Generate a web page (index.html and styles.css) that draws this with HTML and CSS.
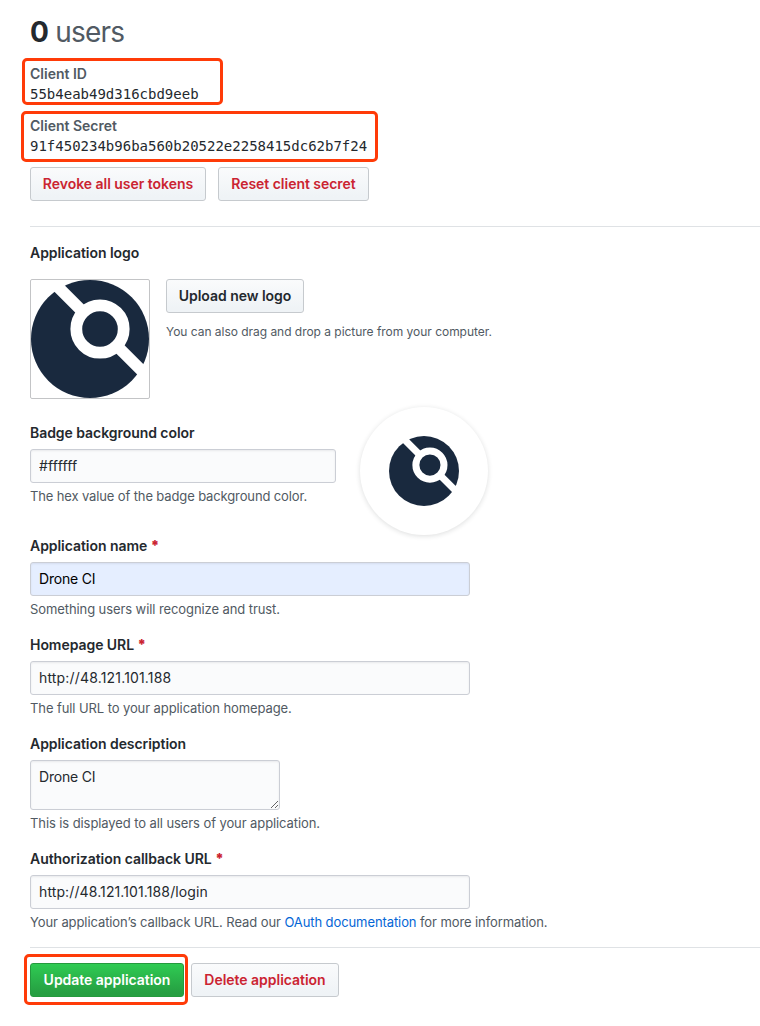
FILE: index.html
```html
<!DOCTYPE html>
<html lang="en">
<head>
<meta charset="utf-8">
<title>Drone CI</title>
<link rel="stylesheet" href="styles.css">
</head>
<body>
<svg class="defs" width="0" height="0" aria-hidden="true">
  <symbol id="drone" viewBox="0 0 118 118">
    <circle cx="59" cy="59" r="59" fill="#19293e"/>
    <path d="M9-11 139 119" stroke="#fff" stroke-width="11.8"/>
    <circle cx="69" cy="49" r="23.7" fill="#19293e" stroke="#fff" stroke-width="11.8"/>
  </symbol>
</svg>
<main class="page">
  <h2 class="users"><strong>0</strong> <span class="users-word">users</span></h2>
  <dl class="keys">
    <div class="key key-id"><dt><span>Client ID</span></dt><dd>55b4eab49d316cbd9eeb</dd></div>
    <div class="key key-secret"><dt><span>Client Secret</span></dt><dd>91f450234b96ba560b20522e2258415dc62b7f24</dd></div>
  </dl>
  <div class="actions token-actions">
    <button class="btn btn-danger w-revoke">Revoke all user tokens</button>
    <button class="btn btn-danger w-reset">Reset client secret</button>
  </div>
  <form class="form">
    <div class="label"><span>Application logo</span></div>
    <div class="logo-row">
      <div class="logo-frame"><svg width="118" height="118"><use href="#drone"/></svg></div>
      <div class="upload">
        <button class="btn w-upload" type="button">Upload new logo</button>
        <p class="upload-note"><span>You can also drag and drop a picture from your computer.</span></p>
      </div>
    </div>
    <div class="badge-row">
      <div class="group badge-group">
        <label class="label" for="color"><span>Badge background color</span></label>
        <input class="input url" id="color" value="#ffffff">
        <p class="note"><span>The hex value of the badge background color.</span></p>
      </div>
      <div class="badge"><svg width="70" height="70"><use href="#drone"/></svg></div>
    </div>
    <div class="group">
      <label class="label" for="name"><span>Application name</span> <b class="required">*</b></label>
      <input class="input autofilled" id="name" value="Drone CI">
      <p class="note"><span>Something users will recognize and trust.</span></p>
    </div>
    <div class="group">
      <label class="label" for="home"><span>Homepage URL</span> <b class="required">*</b></label>
      <input class="input url" id="home" value="http://48.121.101.188">
      <p class="note"><span>The full URL to your application homepage.</span></p>
    </div>
    <div class="group">
      <label class="label" for="desc"><span>Application description</span></label>
      <textarea class="input area" id="desc">Drone CI</textarea>
      <p class="note"><span>This is displayed to all users of your application.</span></p>
    </div>
    <div class="group last">
      <label class="label" for="callback"><span>Authorization callback URL</span> <b class="required">*</b></label>
      <input class="input url url-long" id="callback" value="http://48.121.101.188/login">
      <p class="note"><span>Your application’s callback URL. Read our <a href="#">OAuth documentation</a> for more information.</span></p>
    </div>
    <div class="actions form-actions">
      <div class="update-wrap"><button class="btn btn-primary w-update" type="button">Update application</button></div>
      <button class="btn btn-danger w-delete" type="button">Delete application</button>
    </div>
  </form>
</main>
</body>
</html>
```

FILE: styles.css
```css
*, *::before { box-sizing: border-box; }
body {
  margin: 0;
  background: #fff;
  color: #24292e;
  font: 14px/21px Inter, "Liberation Sans", sans-serif;
}
h2, p, dl, dd { margin: 0; }
.defs { position: absolute; }
.page { height: 1026px; padding: 11px 0 0 30px; overflow: hidden; }

.users { height: 42px; font-size: 28px; line-height: 42px; font-weight: 400; color: #515a63; letter-spacing: -0.8px; }
.users strong { font-weight: 700; color: #24292e; }

.keys { display: flex; flex-direction: column; gap: 11px; padding-top: 11px; }
.key { position: relative; height: 41px; }
.key dt { height: 20px; font-weight: 600; color: #515a63; line-height: 19px; }
.key dd { font: 14px/21px "DejaVu Sans Mono", monospace; }
/* Highlight frames around the important values */
.key::before, .update-wrap::before {
  content: "";
  position: absolute;
  border: 3px solid #ff3b08;
  border-radius: 5px;
  pointer-events: none;
}
.key-id::before { left: -8px; top: -6px; width: 201px; height: 47px; }
.key-secret::before { left: -9px; top: -5px; width: 357px; height: 51px; }

.actions { display: flex; }
.token-actions { gap: 12px; padding: 10px 0 25px; border-bottom: 1px solid #dfe2e5; }
.btn {
  height: 34px;
  padding: 0;
  border: 1px solid #c6cace;
  border-radius: 3px;
  background: linear-gradient(#fafbfc, #eff3f6 90%);
  color: #24292e;
  font: 600 14px/20px Inter, "Liberation Sans", sans-serif;
  letter-spacing: -0.03px;
  white-space: nowrap;
}
.btn-danger { color: #cb2431; }
.btn-primary { border-color: #259a3e; background: linear-gradient(#2fcb53, #269f42 90%); color: #fff; }
.w-revoke { width: 176px; }
.w-reset { width: 151px; }
.w-upload { width: 138px; }
.w-update { width: 154px; }
.w-delete { width: 148px; }

.form { padding-top: 16px; }
.label { display: block; height: 21px; font-weight: 600; line-height: 19px; letter-spacing: -0.05px; }
.required { color: #cb2431; }
.logo-row { display: flex; gap: 16px; margin-top: 15px; }
.logo-frame { width: 120px; height: 120px; border: 1px solid #c3c4c6; border-radius: 2px; }
.logo-frame svg, .badge svg { display: block; }
.upload-note { margin-top: 10px; font-size: 12px; line-height: 18px; letter-spacing: -0.03px; color: #515a63; }

.badge-row { display: flex; gap: 24px; height: 113px; margin-top: 24px; }
.badge-group { width: 306px; }
.badge {
  display: flex;
  align-items: center;
  justify-content: center;
  width: 128px;
  height: 128px;
  margin-top: -16px;
  border-radius: 50%;
  box-shadow: 0 1px 5px rgba(27, 31, 35, 0.15);
}
.group { height: 99px; }
.group:has(.area) { height: 115px; }
.last { height: 98px; }
.input {
  display: block;
  width: 440px;
  height: 34px;
  margin: 5px 0 4px;
  padding: 0 8px 2px;
  border: 1px solid #cbced5;
  border-radius: 3px;
  outline: 0;
  background: #fafbfc;
  box-shadow: inset 0 1px 2px rgba(27, 31, 35, 0.075);
  color: #24292e;
  font: 14px/20px Inter, "Liberation Sans", sans-serif;
  letter-spacing: -0.2px;
}
.url { letter-spacing: 0.17px; }
.url-long { letter-spacing: 0.11px; }
.badge-group .input { width: 306px; }
.autofilled { background: #e5eeff; color: #000; }
.area { width: 250px; height: 50px; padding: 6px 8px; resize: both; overflow: hidden; }
.note { font-size: 13px; line-height: 19px; letter-spacing: -0.09px; color: #515a63; white-space: nowrap; }
.badge-group .note { letter-spacing: -0.13px; }
.note a { color: #0366d6; text-decoration: none; }

.form-actions { gap: 7px; padding-top: 15px; border-top: 1px solid #dfe2e5; }
.update-wrap { position: relative; }
.update-wrap::before { left: -6px; top: -9px; width: 164px; height: 51px; }
```
